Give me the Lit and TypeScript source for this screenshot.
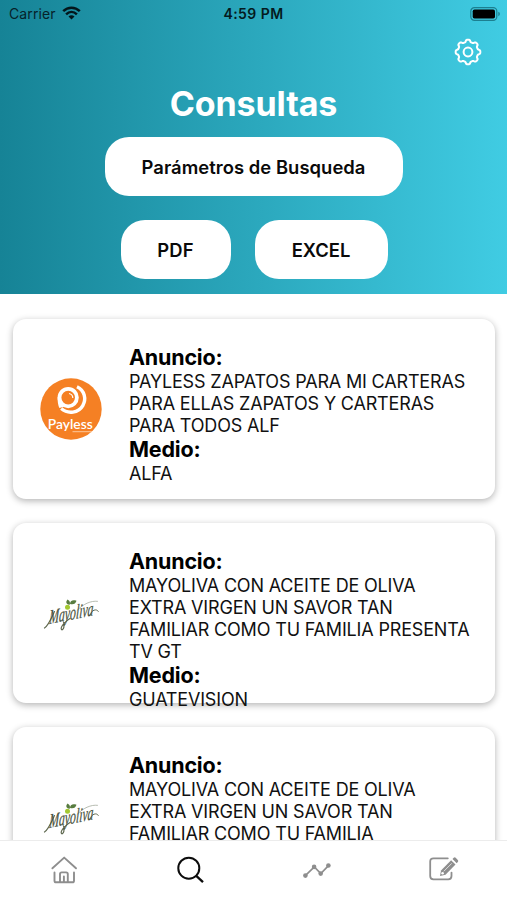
import { LitElement, html, svg, css } from "lit";
import { customElement, property } from "lit/decorators.js";

interface Ad {
  brand: "payless" | "mayoliva";
  lines: string[];
  medium: string;
}

const ADS: Ad[] = [
  {
    brand: "payless",
    lines: ["PAYLESS ZAPATOS PARA MI CARTERAS", "PARA ELLAS ZAPATOS Y CARTERAS", "PARA TODOS ALF"],
    medium: "ALFA",
  },
  {
    brand: "mayoliva",
    lines: ["MAYOLIVA CON ACEITE DE OLIVA", "EXTRA VIRGEN UN SAVOR TAN", "FAMILIAR COMO TU FAMILIA PRESENTA", "TV GT"],
    medium: "GUATEVISION",
  },
  {
    brand: "mayoliva",
    lines: ["MAYOLIVA CON ACEITE DE OLIVA", "EXTRA VIRGEN UN SAVOR TAN", "FAMILIAR COMO TU FAMILIA"],
    medium: "",
  },
];

// Outline of the settings cog: a circle whose radius swells at eight teeth.
const cogPath = (() => {
  const pts: string[] = [];
  for (let i = 0; i < 160; i++) {
    const a = (i / 160) * Math.PI * 2;
    const w = Math.cos(8 * a);
    const r = 11.2 + 1.15 * Math.tanh(2.2 * w);
    pts.push(`${(14 + r * Math.cos(a)).toFixed(2)} ${(14 + r * Math.sin(a)).toFixed(2)}`);
  }
  return `M${pts.join("L")}Z`;
})();

@customElement("status-bar")
export class StatusBar extends LitElement {
  static styles = css`
    :host {
      display: grid;
      grid-template-columns: 1fr auto 1fr;
      align-items: center;
      height: 28px;
      padding: 0 7px 0 9px;
      box-sizing: border-box;
      color: #06222a;
      font-size: 14px;
    }
    .left { display: flex; align-items: center; gap: 6px; letter-spacing: 0.1px; margin-top: -1px; }
    .time { font-size: 14px; font-weight: 600; letter-spacing: 0.45px; color: #041a20; margin: -1px 2px 0 0; }
    .right { display: flex; justify-content: flex-end; margin-top: -1px; }
    svg { display: block; }
    .wifi { margin-top: -1px; }
  `;
  render() {
    return html`
      <div class="left">
        <span>Carrier</span>
        <svg class="wifi" width="19" height="14" viewBox="0 0 19 14" fill="none" stroke="#03161b" stroke-width="2.5">
          <path d="M1.2 5.2C6 .6 13 .6 17.8 5.2" />
          <path d="M4.1 8.3c3.2-3 7.6-3 10.8 0" />
          <path d="M6.5 10.4c1.8-1.5 4.2-1.5 6 0L9.5 13.5z" fill="#03161b" stroke="none" />
        </svg>
      </div>
      <div class="time">4:59 PM</div>
      <div class="right">
        <svg width="30" height="14" viewBox="0 0 30 14">
          <rect x=".8" y=".7" width="26" height="12.6" rx="3.6" fill="none" stroke="#1c7f90" stroke-width="1.2" />
          <rect x="2.7" y="2.5" width="22.3" height="9" rx="1.8" fill="#000" />
          <path d="M28.3 4.8q1.6.6 1.6 2.2t-1.6 2.2z" fill="#1c7f90" />
        </svg>
      </div>
    `;
  }
}

@customElement("brand-logo")
export class BrandLogo extends LitElement {
  @property() brand = "payless";
  static styles = css`
    :host { display: block; width: 62px; height: 62px; }
    svg { display: block; overflow: visible; }
    .payless { font: 600 12.5px "Lato", sans-serif; }
    .mayoliva { font: italic 20px "Liberation Serif", serif; }
  `;
  render() {
    if (this.brand === "payless") {
      return html`<svg width="62" height="62" viewBox="0 0 62 62">
        <circle cx="31" cy="31" r="30.7" fill="#f58024" />
        <circle cx="28.200" cy="19.600" r="8.700" fill="none" stroke="#fff" stroke-width="3.800" />
        <path d="M17.600 19q-.2 7 1.800 11l4.400-1.300V25.500z" fill="#fff" />
        <path d="M37 8.800c7.600 3.600 9.600 12 5.800 18.800-4.200 7.400-14.800 9-21.600 3" fill="none" stroke="#fff" stroke-width="3.400" />
        <path d="M29 15.500q3.800.8 3.800 4.600" fill="none" stroke="#fff" stroke-width="1.200" />
        <text class="payless" x="7.800" y="51" textLength="45" lengthAdjust="spacingAndGlyphs" fill="#fff">Payless</text>
        <path d="M32.500 53.700h19.500" stroke="#fdc79b" stroke-width="1" />
      </svg>`;
    }
    return html`<svg width="62" height="62" viewBox="0 0 62 62">
      <g fill="none" stroke="#5f6950" stroke-linecap="round">
        <path d="M4.500 46C8 44 11 37 14.500 29.500" stroke-width="1.200" />
        <path d="M23.500 40c2 3-.5 9-2 7.500-1.700-2 4-8.500 8.500-11" stroke-width="1.200" />
        <path d="M50 33c1.500-5 6.500-6.800 8.300-3.600" stroke-width="1" />
        <path d="M37 28.500C43 22 51 18.500 57.500 19.300" stroke="#a5ab9d" stroke-width=".8" />
      </g>
      <text class="mayoliva" x="0" y="0" transform="translate(9 42) rotate(-11) skewX(-14)" textLength="45" lengthAdjust="spacingAndGlyphs" fill="#48523e" stroke="#48523e" stroke-width=".25">Mayoliva</text>
      <path d="M29.500 23c-3.500-1-4-3-2-5.500 2 1 3.300 3 2 5.500zM30 22c0-3 2.500-4.500 6.500-3.200-1 3-3 4.200-6.500 3.200z" fill="#587c40" />
      <circle cx="27.500" cy="25.300" r="2.500" fill="#a4c932" />
    </svg>`;
  }
}

@customElement("ad-card")
export class AdCard extends LitElement {
  @property({ attribute: false }) ad!: Ad;
  static styles = css`
    :host {
      display: flex;
      flex: none;
      height: 180px;
      box-sizing: border-box;
      border-radius: 13px;
      background: #fff;
      box-shadow: 0 2px 7px rgba(0, 0, 0, 0.3);
    }
    .logo { width: 116px; flex: none; display: flex; align-items: center; justify-content: center; }
    .body { padding-top: 25px; white-space: nowrap; color: #111; }
    .label { height: 26px; line-height: 26px; font-size: 21.5px; font-weight: 700; letter-spacing: -0.2px; color: #000; }
    .line { height: 22px; line-height: 24px; font-size: 18px; letter-spacing: -0.17px; }
  `;
  render() {
    const { brand, lines, medium } = this.ad;
    return html`
      <div class="logo"><brand-logo .brand=${brand}></brand-logo></div>
      <div class="body">
        <div class="label">Anuncio:</div>
        ${lines.map((l) => html`<div class="line">${l}</div>`)}
        ${medium ? html`<div class="label">Medio:</div><div class="line">${medium}</div>` : ""}
      </div>
    `;
  }
}

@customElement("tab-bar")
export class TabBar extends LitElement {
  static styles = css`
    :host {
      display: grid;
      grid-template-columns: repeat(4, 1fr);
      height: 60px;
      box-sizing: border-box;
      border-top: 1px solid #ececec;
      background: #fff;
    }
    .tab { display: flex; justify-content: center; padding: 14px 0 0 1px; }
    svg { display: block; }
  `;
  private icons = [
    svg`<g fill="none" stroke="#8e8e8e" stroke-width="1.900" stroke-linejoin="round" stroke-linecap="round">
      <path d="M4.400 13.300L16.200 2.600 28 13.300" />
      <path d="M6.500 17.500v8.200q0 1.600 1.600 1.600h16.300q1.600 0 1.600-1.600V17.500" />
      <path d="M12 27v-7.900q0-1.700 1.700-1.700h4.400q1.700 0 1.700 1.700V27M15.900 21.500v5.500" />
    </g>`,
    svg`<g fill="none" stroke="#0c0c0c" stroke-width="2">
      <circle cx="13.800" cy="13.200" r="10.500" /><path d="M21 20.700l7 6.500" stroke-width="2.300" />
    </g>`,
    svg`<g fill="#8e8e8e"><path d="M4.300 20.600l9-8.700 6.500 6.700 7.700-8" fill="none" stroke="#8e8e8e" stroke-width="1.700" />
      <circle cx="4.400" cy="20.600" r="2.300" /><circle cx="13.100" cy="11.900" r="2.300" />
      <circle cx="19.700" cy="18.600" r="2.300" /><circle cx="27.400" cy="10.500" r="2.300" /></g>`,
    svg`<g transform="translate(.8 0)"><path d="M19 3.300H4.700q-3.300 0-3.300 3.300v14.500q0 3.300 3.300 3.300h14.700q3.300 0 3.300-3.300v-3.500" fill="none" stroke="#8e8e8e" stroke-width="1.800" stroke-linecap="round" />
      <path d="M12.200 15.500L22.300 5.200l4.400 4.400-10 10.100-5.500 1.300z" fill="#8e8e8e" />
      <path d="M23.700 4l1.200-1.200q1-.9 2 0l2.100 2.100q1 1 0 2L27.900 8.200z" fill="#8e8e8e" />
      <path d="M15 16.300L23 8.300" stroke="#fff" stroke-width=".7" /><circle cx="13.800" cy="18.300" r="1.300" fill="#fff" /></g>`,
  ];
  render() {
    return this.icons.map(
      (i) => html`<div class="tab"><svg width="32" height="32" viewBox="0 0 32 32">${i}</svg></div>`
    );
  }
}

@customElement("app-root")
export class AppRoot extends LitElement {
  static styles = css`
    :host {
      display: flex;
      flex-direction: column;
      height: 900px;
      overflow: hidden;
      background: #fff;
      font-family: "Inter", "Liberation Sans", sans-serif;
    }
    .header {
      height: 294px;
      flex: none;
      display: flex;
      flex-direction: column;
      background: linear-gradient(90deg, #168396, #40cce3);
    }
    .tools { display: flex; justify-content: flex-end; padding: 10px 25px 0 0; }
    .tools svg { display: block; }
    .title {
      margin: 16px 0 0;
      height: 44px;
      line-height: 44px;
      text-align: center;
      font-size: 34px;
      font-weight: 700;
      color: #fff;
      letter-spacing: -0.1px;
    }
    .row { display: flex; justify-content: center; gap: 24px; }
    .search { margin-top: 11px; }
    .exports { margin-top: 24px; padding-left: 1px; }
    button {
      height: 59px;
      padding: 0;
      border: 0;
      border-radius: 24px;
      background: #fff;
      font: 600 18.4px "Inter", sans-serif;
      color: #0a0a0a;
    }
    .wide { width: 298px; letter-spacing: 0.05px; }
    .pdf { width: 110px; letter-spacing: 0.1px; }
    .excel { width: 133px; letter-spacing: 0; }
    .list {
      flex: 1;
      min-height: 0;
      overflow: hidden;
      display: flex;
      flex-direction: column;
      gap: 24px;
      padding: 25px 12px 0 13px;
    }
    tab-bar { flex: none; position: relative; }
  `;
  render() {
    return html`
      <div class="header">
        <status-bar></status-bar>
        <div class="tools">
          <svg width="28" height="28" viewBox="0 0 28 28" fill="none" stroke="#fff" stroke-width="2" stroke-linejoin="round">
            <path d=${cogPath} /><circle cx="14" cy="14" r="4.400" />
          </svg>
        </div>
        <h1 class="title">Consultas</h1>
        <div class="row search"><button class="wide">Parámetros de Busqueda</button></div>
        <div class="row exports"><button class="pdf">PDF</button><button class="excel">EXCEL</button></div>
      </div>
      <div class="list">${ADS.map((ad) => html`<ad-card .ad=${ad}></ad-card>`)}</div>
      <tab-bar></tab-bar>
    `;
  }
}
